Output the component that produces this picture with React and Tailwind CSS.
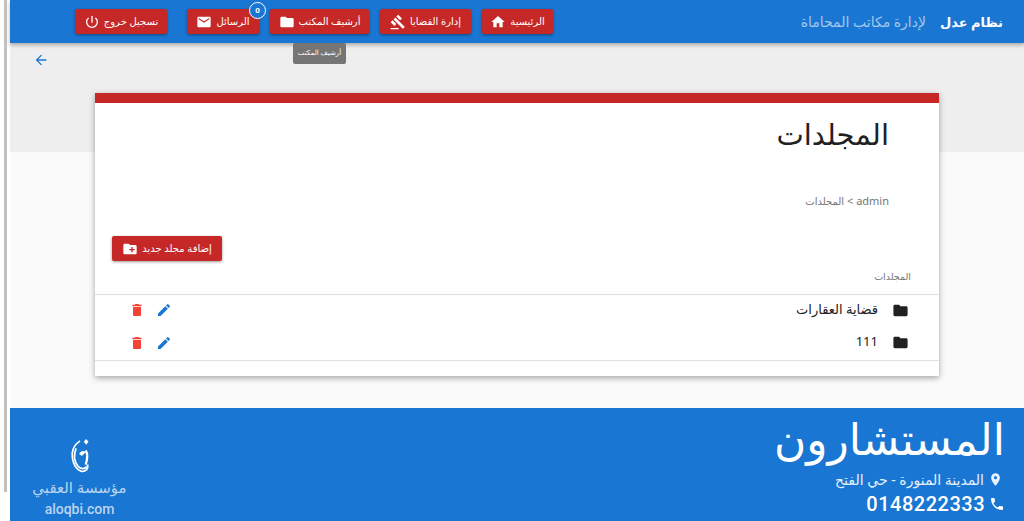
import { MdHome, MdFolder, MdMail, MdPowerSettingsNew, MdDelete, MdEdit, MdPlace, MdPhone, MdCreateNewFolder, MdGavel, MdArrowBack } from "react-icons/md";

const font = "font-['Noto_Sans','DejaVu_Sans',sans-serif]";

function NavButton({ label, icon: Icon, width, children }) {
  return (
    <div className={`relative flex h-[25px] items-center justify-center gap-1 rounded-[2px] bg-[#c62828] text-[10px] text-white shadow-[0_1px_3px_rgba(0,0,0,0.4)] ${width}`}>
      <span>{label}</span>
      <Icon className="text-[16px]" />
      {children}
    </div>
  );
}

function FolderRow({ name }) {
  return (
    <div className="flex h-[32.5px] items-center pr-[30px] pb-[2px] pl-[34px]">
      <MdFolder className="text-[17px] text-[#212121]" />
      <span className="mr-[14px] mb-[2px] text-[13px] text-[#212121]">{name}</span>
      <div className="mr-auto flex items-center gap-[11px]">
        <MdEdit className="text-[16px] text-[#1976d2]" />
        <MdDelete className="text-[16px] text-[#f44336]" />
      </div>
    </div>
  );
}

export default function App() {
  return (
    <div dir="ltr" className={`flex h-[521px] w-full overflow-hidden bg-white ${font}`}>
      <div className="w-[10px] shrink-0 pl-[4px]">
        <div className="h-[492px] w-[3px] bg-[#c1c1c1]" />
      </div>

      <div dir="rtl" className="flex min-w-0 flex-1 flex-col">
        <header className="relative z-10 flex h-[43px] items-center bg-[#1976d2] pr-[21px] shadow-[0_2px_4px_rgba(0,0,0,0.3)]">
          <div className="flex w-[203px] shrink-0 items-baseline gap-[14px] whitespace-nowrap">
            <span className="text-[13px] font-bold text-white">نظام عدل</span>
            <span className="text-[14px] text-white/60">لإدارة مكاتب المحاماة</span>
          </div>
          <div className="mr-[247px] flex items-center">
            <NavButton label="الرئيسية" icon={MdHome} width="w-[71px]" />
            <NavButton label="إدارة القضايا" icon={MdGavel} width="w-[91px] mr-[11px]" />
            <NavButton label="أرشيف المكتب" icon={MdFolder} width="w-[99px] mr-[11px]">
              <div className="absolute top-[34px] left-[23px] flex h-[21px] w-[53px] items-center justify-center rounded-[2px] bg-[#757575] text-[7px] whitespace-nowrap text-white">
                أرشيف المكتب
              </div>
            </NavButton>
            <NavButton label="الرسائل" icon={MdMail} width="w-[72px] mr-[11px]">
              <div className="absolute -top-[7px] -right-[7px] flex h-[17px] w-[17px] items-center justify-center rounded-full border border-white bg-[#1976d2] font-['Roboto'] text-[8px] font-bold text-white">
                0
              </div>
            </NavButton>
            <NavButton label="تسجيل خروج" icon={MdPowerSettingsNew} width="w-[92px] mr-[20px]" />
          </div>
        </header>

        <main className="flex flex-1 flex-col bg-[linear-gradient(#eeeeee_109px,#fafafa_109px)]">
          <div className="flex h-[50px] items-center justify-end pb-[16px] pl-[23px]">
            <MdArrowBack className="text-[16px] text-[#1976d2]" />
          </div>
          <div className="mx-[85px] h-[283px] border-t-[10px] border-[#c62828] bg-white shadow-[0_2px_6px_rgba(0,0,0,0.35)]">
            <div className="pt-[9px] pr-[50px]">
              <h1 className="text-[29px] leading-[44px] text-[#212121]">المجلدات</h1>
              <p className="mt-[37px] text-[11px] leading-[16px] text-[#757575]">
                admin &gt; <span className="text-[10px]">المجلدات</span>
              </p>
            </div>
            <div className="mt-[27px] flex justify-end pl-[17px]">
              <div className="flex h-[25px] w-[110px] items-center justify-center gap-1 rounded-[2px] bg-[#c62828] text-[10px] text-white shadow-[0_1px_3px_rgba(0,0,0,0.4)]">
                <span>إضافة مجلد جديد</span>
                <MdCreateNewFolder className="text-[16px]" />
              </div>
            </div>
            <div className="flex h-[33px] items-center pr-[28px] text-[9.5px] text-[#757575]">المجلدات</div>
            <div className="border-y border-[#e0e0e0]">
              <FolderRow name="قضاية العقارات" />
              <FolderRow name="111" />
            </div>
          </div>
        </main>

        <footer className="flex h-[113px] shrink-0 justify-between bg-[#1976d2] pr-[21px] pl-[23px] text-white">
          <div className="flex flex-col">
            <div className="-mr-[2px] h-[60px] text-[44px] leading-[60px] whitespace-nowrap">المستشارون</div>
            <div className="flex h-[22px] items-center gap-[2px] text-[14px] text-white/90">
              <MdPlace className="text-[15px]" />
              <span className="mr-[2px]">المدينة المنورة - حي الفتح</span>
            </div>
            <div className="flex h-[28px] items-center gap-[4px]">
              <MdPhone className="-mr-[2px] text-[16px]" />
              <span className="font-['Roboto'] text-[20px] font-medium tracking-[0.5px]">0148222333</span>
            </div>
          </div>
          <div className="flex w-[93px] flex-col items-center pt-[30px] text-white/70">
            <svg width="24" height="36" viewBox="0 0 24 38" fill="none" stroke="white" strokeWidth="1.8">
              <path d="M12 3 C6 7 3 14 4 21 C5 28 8 33 13 35 C18 36 21 33 20 28" />
              <path d="M8 11 C5 18 6 25 10 30 C13 33 17 33 19 30" />
              <path d="M18 13 C20 16 20 22 18 28" strokeWidth="2.4" />
              <path d="M16 4 L18.5 1 L21 4 L18.5 7 Z" fill="white" stroke="none" />
              <path d="M11 17 C13 13 16 13 18 15 L14 19 Z" fill="white" stroke="none" />
            </svg>
            <div className="mt-[3px] text-[15px] leading-[20px] whitespace-nowrap">مؤسسة العقبي</div>
            <div className="mt-[3px] font-['Roboto'] text-[14px] leading-[18px] font-medium">aloqbi.com</div>
          </div>
        </footer>
      </div>
    </div>
  );
}
